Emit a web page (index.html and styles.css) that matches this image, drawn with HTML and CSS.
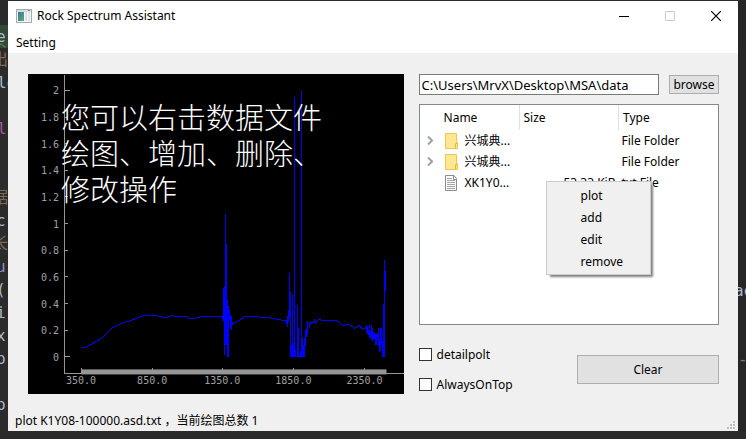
FILE: index.html
```html
<!DOCTYPE html>
<html lang="en">
<head>
<meta charset="utf-8">
<title>Rock Spectrum Assistant</title>
<meta name="viewport" content="width=device-width, initial-scale=1">
<link rel="stylesheet" href="styles.css">
</head>
<body>
<div class="gutter gutter-left" aria-hidden="true">
<div class="line added"><span>e</span></div>
<div class="line comment wide">出</div>
<div class="line">le</div>
<div class="line"></div>
<div class="line keyword">l</div>
<div class="line"></div>
<div class="line"></div>
<div class="line comment wide">据</div>
<div class="line cut">c</div>
<div class="line comment wide">长</div>
<div class="line builtin cut">ur</div>
<div class="line cut">(</div>
<div class="line cut">i</div>
<div class="line cut">x</div>
<div class="line cut">p</div>
<div class="line"></div>
<div class="line cut">p</div>
</div>

<main class="window">
  <header class="titlebar">
    <svg class="app-icon" width="16" height="14" viewBox="0 0 16 14" aria-hidden="true">
      <defs><linearGradient id="pane" x1="0" y1="0" x2="1" y2="1"><stop offset="0" stop-color="#3f74a8"/><stop offset="1" stop-color="#55b06c"/></linearGradient></defs>
      <rect x=".5" y=".5" width="15" height="13" fill="#f4f6f8" stroke="#a5abb0"/>
      <rect x="1" y="1" width="14" height="2" fill="#d3dae0"/>
      <rect x="2" y="3" width="6" height="9" fill="url(#pane)"/>
      <rect x="9" y="3" width="2" height="9" fill="#dde1e5"/>
      <rect x="12" y="3" width="2" height="9" fill="#e3e6e9"/>
      <rect x="12" y="1" width="2" height="1" fill="#6aa67c"/>
    </svg>
    <h1>Rock Spectrum Assistant</h1>
    <div class="controls">
      <button type="button" aria-label="Minimize"><svg width="10" height="10" viewBox="0 0 10 10"><path d="M0 5.5H10" stroke="#000"/></svg></button>
      <button type="button" aria-label="Maximize" disabled><svg width="10" height="10" viewBox="0 0 10 10"><path d="M.5 .5H9.500V9.500H.5Z" fill="none" stroke="#ccc"/></svg></button>
      <button type="button" aria-label="Close"><svg width="10" height="10" viewBox="0 0 10 10"><path d="M0 0L10 10M10 0L0 10" stroke="#000" stroke-width="1.200"/></svg></button>
    </div>
  </header>
  <nav class="menubar"><button type="button">Setting</button></nav>

  <div class="content">
    <section class="plot">
      <svg viewBox="28 74 375 320" role="img" aria-label="Spectrum plot">
        <g class="axes">
          <path d="M64.500 75V373.500H403"/>
          <path d="M64 90.500H70M64 356.500H70"/>
          <path d="M64 117.500H68M64 143.500H68M64 170.500H68M64 196.500H68M64 223.500H68M64 250.500H68M64 276.500H68M64 303.500H68M64 330.500H68"/>
          <path d="M81.500 368V373M152.500 368V373M222.500 368V373M293.500 368V373M364.500 368V373"/>
        </g>
        <rect class="range" x="81" y="369" width="305" height="5"/>
        <g class="labels ylabels">
          <text x="59" y="94">2</text><text x="59" y="121">1.8</text><text x="59" y="148">1.6</text><text x="59" y="174">1.4</text><text x="59" y="201">1.2</text><text x="59" y="228">1</text><text x="59" y="254">0.8</text><text x="59" y="281">0.6</text><text x="59" y="308">0.4</text><text x="59" y="334">0.2</text><text x="59" y="361">0</text>
        </g>
        <g class="labels xlabels">
          <text x="81" y="384">350.0</text><text x="152" y="384">850.0</text><text x="222" y="384">1350.0</text><text x="293" y="384">1850.0</text><text x="364" y="384">2350.0</text>
        </g>
        <g class="curve">
          <path d="M81 347.500H84L92 343.500L97 340.500L102 337.500L107 332.500L112 327.500L116 325.500L120 323.500L130 320.500L137 317.500L143 315.500H157L165 317.500L171 315.500L186 316.500L191 318.500L201 316.500H222L223 320.500M229 310L231 330V316L232 324L235 322L240 319.500L244 316.500H256L270 317.500L280 319.500L286 320.500L287 326V318L289 310V273"/>
          <path d="M223.500 288V321M224.500 286V355M225.500 214V345M226.500 244V345M227.500 300V357M228.500 306V357M229.500 314V320M230.500 315V322"/>
          <path d="M287.500 318V327M288.500 310V322M289.500 273V318M290.500 292V357M291.500 345V357M292.500 295V357M293.500 343V357M294.500 97V357M295.500 350V357M297.500 305V357M298.500 328V357M299.500 355V357M300.500 351V357M301.500 91V357M302.500 338V357M303.500 345V357M304.500 338V357M305.500 330V346M306.500 328V337M307.500 321V335M290 356.500H305"/>
          <path d="M307 322L309 323V328L310 322H313L314 320L315 323L317 320L319 319L322 320H335L338 321L342 325L349 324L354 328L359 325L362 329L366 327V332"/>
          <path d="M366.500 325V331M367.500 327V334M368.500 330V335M369.500 325V338M370.500 331V337M371.500 325V340M372.500 328V341M373.500 332V339M374.500 333V339M375.500 334V345M376.500 333V340M377.500 328V346M378.500 339V352M379.500 328V351M380.500 328V344M381.500 341V357M382.500 304V357M383.500 260V357M384.500 271V291"/>
        </g>
      </svg>
      <p class="hint">您可以右击数据文件<br>绘图、增加、删除、<br>修改操作</p>
    </section>

    <section class="side">
      <div class="path-row">
        <input class="path" type="text" aria-label="Data folder" value="C:\Users\MrvX\Desktop\MSA\data">
        <button type="button" class="push browse">browse</button>
      </div>
      <div class="tree">
        <table>
          <thead><tr><th scope="col">Name</th><th scope="col">Size</th><th scope="col">Type</th></tr></thead>
          <tbody>
            <tr><td><div class="name"><svg class="arrow" width="6" height="9" viewBox="0 0 6 9"><path d="M1 .5L5 4.500L1 8.500"/></svg><svg class="icon" width="13" height="16" viewBox="0 0 13 16"><path d="M.5 .5H11.500V9.500H12.500V15.500H.5Z" fill="#ffe693" stroke="#efc84a"/><path d="M10.500 15V10.500H12.500" fill="none" stroke="#e8b92f"/></svg><span>兴城典...</span></div></td><td></td><td>File Folder</td></tr>
            <tr><td><div class="name"><svg class="arrow" width="6" height="9" viewBox="0 0 6 9"><path d="M1 .5L5 4.500L1 8.500"/></svg><svg class="icon" width="13" height="16" viewBox="0 0 13 16"><path d="M.5 .5H11.500V9.500H12.500V15.500H.5Z" fill="#ffe693" stroke="#efc84a"/><path d="M10.500 15V10.500H12.500" fill="none" stroke="#e8b92f"/></svg><span>兴城典...</span></div></td><td></td><td>File Folder</td></tr>
            <tr><td><div class="name"><span class="arrow"></span><svg class="icon" width="13" height="16" viewBox="0 0 13 16"><path d="M.5 .5H9L11.500 3.500V15.500H.5Z" fill="#fafafa" stroke="#8c8c8c"/><path d="M8.500 1V4.500H11" fill="none" stroke="#8c8c8c"/><path d="M2 3.500H7M2 5.500H10M2 7.500H10M2 9.500H10M2 11.500H10M2 13.500H10" stroke="#a2a8a8"/></svg><span>XK1Y0...</span></div></td><td class="size">53.33 KiB</td><td>txt File</td></tr>
          </tbody>
        </table>
        <div class="context" role="menu">
          <button type="button" role="menuitem">plot</button>
          <button type="button" role="menuitem">add</button>
          <button type="button" role="menuitem">edit</button>
          <button type="button" role="menuitem">remove</button>
        </div>
      </div>
      <div class="options">
        <div class="checks">
          <label><input type="checkbox">detailpolt</label>
          <label><input type="checkbox">AlwaysOnTop</label>
        </div>
        <button type="button" class="push clear">Clear</button>
      </div>
    </section>
  </div>

  <footer class="status">
    <span>plot K1Y08-100000.asd.txt ，当前绘图总数 1</span>
    <svg class="grip" width="8" height="8" viewBox="0 0 8 8" aria-hidden="true"><path d="M6 0h2v2h-2zM3 3h2v2h-2zM6 3h2v2h-2zM0 6h2v2h-2zM3 6h2v2h-2zM6 6h2v2h-2z" fill="#bfbfbf"/></svg>
  </footer>
</main>

<div class="gutter gutter-right" aria-hidden="true">
<div class="line cut">ae</div>
<div class="line"></div>
<div class="line"></div>
<div class="line dashes">--</div>
</div>
</body>
</html>
```
FILE: styles.css
```css
* { box-sizing: border-box; }

body {
  margin: 0;
  min-height: 100vh;
  padding: 1px 0 8px;
  display: grid;
  grid-template-columns: 8px minmax(0, 1fr) 8px;
  background: #2b2b2b;
  color: #000;
  font: 12px/16px "Noto Sans", "Noto Sans CJK SC", sans-serif;
}

button, input { font: inherit; color: inherit; }

/* Editor visible behind the window */
.gutter {
  overflow: hidden;
  color: #a9b7c6;
  font: 16px/23px "DejaVu Sans Mono", "Noto Sans CJK SC", monospace;
  white-space: nowrap;
}
.gutter-left { padding-top: 24px; }
.gutter-right { padding-top: 278px; background: #262626; }
.line { height: 23px; }
.added { background: #32493a; text-indent: -4px; }
.added span { text-decoration: underline wavy #62966a 1px; }
.cut { text-indent: -4px; }
.wide { text-indent: -8px; }
.comment { color: #7c6a58; }
.keyword { color: #a855a0; }
.builtin { color: #8888c6; }
.gutter-left .line:nth-child(3), .keyword { text-indent: -3px; }
.dashes { color: #777; }

.window {
  display: flex;
  flex-direction: column;
  background: #f0f0f0;
}

.titlebar {
  display: flex;
  align-items: center;
  height: 30px;
  padding-left: 8px;
  background: #fff;
}
.titlebar h1 { margin: 0 0 0 5px; font-size: 12px; font-weight: 400; }
.controls { display: flex; margin-left: auto; align-self: stretch; }
.controls button {
  width: 46px;
  padding: 0 0 0 2px;
  border: 0;
  background: none;
  display: grid;
  place-items: center;
}

.menubar { height: 22px; background: #fff; }
.menubar button { height: 22px; padding: 2px 8px 0; border: 0; background: none; }

.content {
  flex: 1;
  display: grid;
  grid-template-columns: minmax(0, 5fr) minmax(0, 4fr);
  gap: 15px;
  padding: 21px 19px 16px 20px;
}

.plot { position: relative; background: #000; }
.plot svg { display: block; width: 100%; height: 100%; }
.axes path { fill: none; stroke: #969696; shape-rendering: crispEdges; }
.range { fill: #969696; }
.labels { fill: #a0a0a0; font: 10px "DejaVu Sans Mono", monospace; }
.ylabels { text-anchor: end; }
.xlabels { text-anchor: middle; }
.curve path { fill: none; stroke: #00f; shape-rendering: crispEdges; }
.hint {
  position: absolute;
  left: 33px;
  top: 24px;
  margin: 0;
  color: #fff;
  font: 300 29px/36px "Noto Sans CJK SC", sans-serif;
  white-space: nowrap;
}

.side { display: flex; flex-direction: column; }
.path-row { display: flex; align-items: center; gap: 10px; }
.path {
  flex: 1;
  min-width: 0;
  height: 21px;
  padding: 0 2px;
  border: 1px solid #7a7a7a;
  background: #fff;
  font-size: 13px;
}
.push { padding: 0; border: 1px solid #adadad; background: #e1e1e1; }
.browse { width: 50px; height: 19px; line-height: 16px; }

.tree {
  position: relative;
  flex: 1;
  min-height: 221px;
  margin-top: 9px;
  border: 1px solid #828790;
  background: #fff;
}
.tree table { width: 100%; border-collapse: collapse; table-layout: fixed; }
.tree th {
  height: 25px;
  padding: 0 4px;
  border-right: 1px solid #e0e0e0;
  font-weight: 400;
  text-align: left;
}
.tree th:first-child { padding-left: 24px; }
.tree th:last-child { border-right: 0; }
.tree td { height: 21px; padding: 0 3px; white-space: nowrap; }
.tree td:first-child { padding: 0; }
.name { display: flex; align-items: center; padding-left: 7px; }
.arrow { width: 6px; fill: none; stroke: #a0a0a0; stroke-width: 2; }
.icon { margin: 0 7px 0 12px; }
.size { text-align: right; }

.context {
  position: absolute;
  left: 126px;
  top: 76px;
  width: 105px;
  padding: 3px 2px 1px;
  border: 1px solid #ccc;
  background: #f0f0f0;
  box-shadow: 3px 3px 2px -1px #808080;
}
.context button {
  display: block;
  width: 100%;
  height: 22px;
  padding: 0 0 0 32px;
  border: 0;
  background: none;
  text-align: left;
}

.options { display: flex; align-items: center; height: 69px; padding-top: 20px; }
.checks { display: grid; gap: 14px; }
.checks label { display: flex; align-items: center; gap: 5px; }
.checks input {
  appearance: none;
  width: 13px;
  height: 13px;
  margin: 0;
  border: 1px solid #333;
  background: #fff;
}
.clear { width: 142px; height: 29px; margin-left: auto; }

.status {
  display: flex;
  justify-content: space-between;
  align-items: center;
  height: 21px;
  padding: 0 3px 0 7px;
}
.grip { align-self: flex-end; margin-bottom: 2px; }
```
